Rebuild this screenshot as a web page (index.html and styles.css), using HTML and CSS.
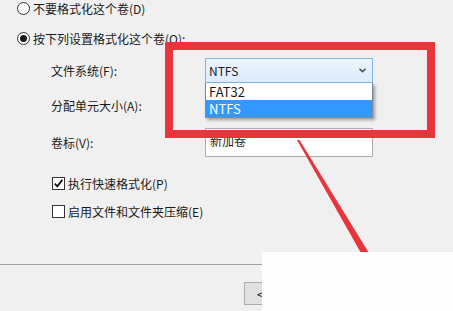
FILE: index.html
```html
<!DOCTYPE html>
<html>
<head>
    <title>格式化分区</title>
    <meta charset="utf-8">
    <link rel="stylesheet" href="styles.css">
</head>
<body>
  <div class="dialog">
    <div class="choices">
      <div class="option">
        <span class="radio"></span>
        <span>不要格式化这个卷(D)</span>
      </div>
      <div class="option second">
        <span class="radio checked"></span>
        <span>按下列设置格式化这个卷(O):</span>
      </div>
    </div>

    <div class="fields">
      <label>文件系统(F):</label>
      <div class="select">
        <span>NTFS</span>
        <svg class="chevron" width="7" height="5" viewBox="0 0 7 5"><path d="M0.5 0.8 L3.5 3.8 L6.5 0.8" fill="none" stroke="#444" stroke-width="1.4"/></svg>
      </div>
      <label>分配单元大小(A):</label>
      <div class="select"></div>
      <label>卷标(V):</label>
      <div class="textbox">新加卷</div>
    </div>

    <div class="checks">
      <div class="option">
        <span class="checkbox">
          <svg width="11" height="11" viewBox="0 0 11 11"><path d="M1.8 5.6 L4.3 8.3 L9.3 1.9" fill="none" stroke="#111" stroke-width="1.8"/></svg>
        </span>
        <span>执行快速格式化(P)</span>
      </div>
      <div class="option">
        <span class="checkbox"></span>
        <span>启用文件和文件夹压缩(E)</span>
      </div>
    </div>

    <div class="separator"></div>
    <div class="footer">
      <button class="btn">&lt; 上一步(B)</button>
    </div>

    <!-- overlays -->
    <ul class="droplist">
      <li>FAT32</li>
      <li class="active">NTFS</li>
    </ul>
    <div class="highlight"></div>
    <svg class="arrow" width="453" height="311" viewBox="0 0 453 311">
      <polygon points="297,140 299.5,140 369,253 361,253" fill="#e8343a"/>
    </svg>
    <div class="cover"></div>
  </div>
</body>
</html>
```

FILE: styles.css
```css
* {
  box-sizing: border-box;
}

body {
  margin: 0;
  background: #f0f0f0;
  color: #1a1a1a;
  font-family: "Segoe UI", "Noto Sans CJK SC", sans-serif;
  font-size: 12px;
  line-height: 13px;
}

.dialog {
  position: relative;
  width: 453px;
  height: 311px;
  overflow: hidden;
}

.choices {
  padding: 2px 0 0 17px;
}

.option {
  display: flex;
  align-items: center;
  gap: 3px;
  height: 13px;
  white-space: nowrap;
}

.option.second {
  margin-top: 17px;
}

.radio {
  width: 13px;
  height: 13px;
  border: 1px solid #333;
  border-radius: 50%;
  background: #fff;
  position: relative;
}
.radio.checked::after {
  content: "";
  position: absolute;
  left: 2px;
  top: 2px;
  width: 7px;
  height: 7px;
  border-radius: 50%;
  background: #1a1a1a;
}

.fields {
  display: grid;
  grid-template-columns: 154px 168px;
  grid-template-rows: 25px 25px 29px;
  row-gap: 10px;
  align-items: center;
  margin-top: 13px;
  padding-left: 51px;
}

.select {
  height: 25px;
  display: flex;
  align-items: center;
  justify-content: space-between;
  padding: 0 6px 0 3px;
  border: 1px solid #7eb4ea;
  background: linear-gradient(#ecf4fc, #dcecfc);
}

.textbox {
  height: 29px;
  padding: 5px 4px 0;
  border: 1px solid #adadad;
  background: #fff;
}

.checks {
  margin-top: 20px;
  padding-left: 52px;
}
.checks .option + .option {
  margin-top: 15px;
}

.checkbox {
  width: 13px;
  height: 13px;
  border: 1px solid #333;
  background: #fff;
  display: flex;
  align-items: center;
  justify-content: center;
}

.separator {
  margin-top: 46px;
  height: 1px;
  background: #a0a0a0;
}

.footer {
  padding: 17px 0 0 244px;
}

.btn {
  width: 80px;
  height: 23px;
  padding: 0 0 0 12px;
  text-align: left;
  border: 1px solid #adadad;
  background: #e1e1e1;
  font: inherit;
  color: #1a1a1a;
}

.droplist {
  position: absolute;
  left: 205px;
  top: 83px;
  width: 168px;
  margin: 0;
  padding: 0;
  list-style: none;
  border: 1px solid #7a8a9a;
  border-top: none;
  background: #fff;
  box-shadow: 2px 2px 3px rgba(0, 0, 0, 0.35);
  font-size: 13px;
}
.droplist li {
  height: 17px;
  line-height: 17px;
  padding-left: 3px;
}
.droplist li.active {
  background: #3399ff;
  color: #fff;
}

.highlight {
  position: absolute;
  left: 165px;
  top: 42px;
  width: 270px;
  height: 96px;
  border: 8px solid #e8343a;
}

.arrow {
  position: absolute;
  left: 0;
  top: 0;
}

.cover {
  position: absolute;
  left: 262px;
  top: 252px;
  right: 0;
  bottom: 0;
  background: #fefefe;
}
```
